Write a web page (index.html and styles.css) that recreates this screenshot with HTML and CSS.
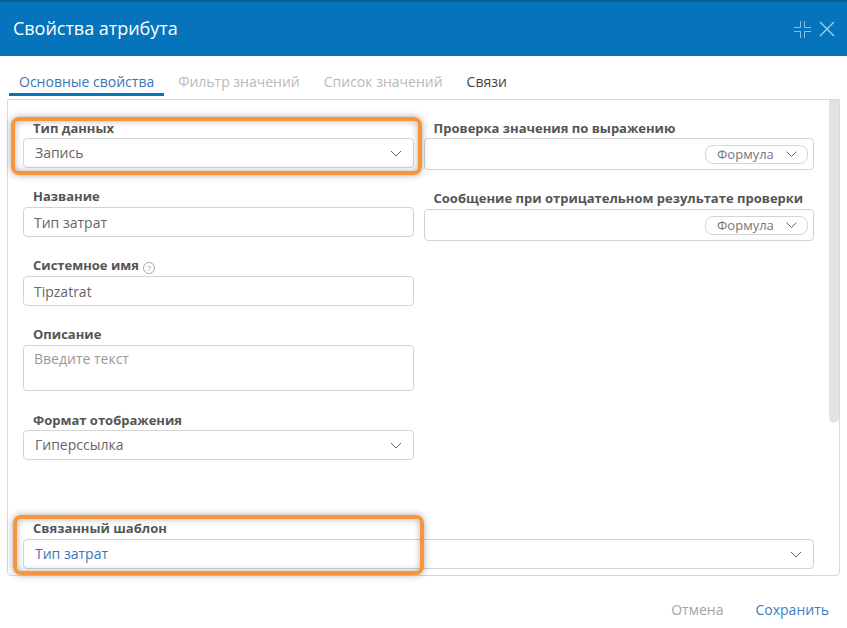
FILE: index.html
```html
<!DOCTYPE html>
<html lang="en">
<head>
  <meta charset="UTF-8">
  <title>Свойства атрибута</title>
  <link rel="stylesheet" href="styles.css">
</head>
<body>
  <div class="dialog">
    <div class="header">
      <span class="title">Свойства атрибута</span>
      <div class="header-icons">
        <svg width="17" height="17" viewBox="0 0 17 17" fill="none" stroke="#8cc0e3" stroke-width="1">
          <path d="M0 6.500h6.500V0M17 6.500h-6.500V0M0 10.500h6.500V17M17 10.500h-6.500V17"/>
        </svg>
        <svg width="16" height="16" viewBox="0 0 16 16" fill="none" stroke="#a9d0ea" stroke-width="1.3">
          <path d="M1 1l14 14M15 1L1 15"/>
        </svg>
      </div>
    </div>

    <div class="tabs">
      <div class="tab active">Основные свойства</div>
      <div class="tab disabled">Фильтр значений</div>
      <div class="tab disabled">Список значений</div>
      <div class="tab dark">Связи</div>
    </div>

    <div class="panel">
      <div class="scrollbar"></div>
      <div class="columns">
        <div class="col">
          <div class="field">
            <div class="label low">Тип данных</div>
            <div class="control select">
              <span>Запись</span>
              <svg class="chevron" width="12" height="7" viewBox="0 0 12 7" fill="none" stroke="#666" stroke-width="1"><path d="M1 1l5 5 5-5"/></svg>
            </div>
          </div>
          <div class="field">
            <div class="label">Название</div>
            <div class="control">Тип затрат</div>
          </div>
          <div class="field">
            <div class="label">Системное имя <span class="help">?</span></div>
            <div class="control">Tipzatrat</div>
          </div>
          <div class="field">
            <div class="label">Описание</div>
            <div class="control area">Введите текст</div>
          </div>
          <div class="field">
            <div class="label low">Формат отображения</div>
            <div class="control select">
              <span>Гиперссылка</span>
              <svg class="chevron" width="12" height="7" viewBox="0 0 12 7" fill="none" stroke="#666" stroke-width="1"><path d="M1 1l5 5 5-5"/></svg>
            </div>
          </div>
        </div>

        <div class="col">
          <div class="field">
            <div class="label low">Проверка значения по выражению</div>
            <div class="control formula">
              <div class="pill">
                <span>Формула</span>
                <svg width="11" height="6" viewBox="0 0 11 6" fill="none" stroke="#666" stroke-width="1"><path d="M.5.500l5 5 5-5"/></svg>
              </div>
            </div>
          </div>
          <div class="field">
            <div class="label">Сообщение при отрицательном результате проверки</div>
            <div class="control formula">
              <div class="pill">
                <span>Формула</span>
                <svg width="11" height="6" viewBox="0 0 11 6" fill="none" stroke="#666" stroke-width="1"><path d="M.5.500l5 5 5-5"/></svg>
              </div>
            </div>
          </div>
        </div>
      </div>

      <div class="field linked">
        <div class="label">Связанный шаблон</div>
        <div class="control select">
          <span class="link">Тип затрат</span>
          <svg class="chevron" width="12" height="7" viewBox="0 0 12 7" fill="none" stroke="#666" stroke-width="1"><path d="M1 1l5 5 5-5"/></svg>
        </div>
      </div>
    </div>

    <div class="footer">
      <span class="btn cancel">Отмена</span>
      <span class="btn save">Сохранить</span>
    </div>

    <div class="mark mark-type"></div>
    <div class="mark mark-linked"></div>
  </div>
</body>
</html>
```

FILE: styles.css
```css
body {
  margin: 0;
  background: #fff;
  font-family: "Open Sans", sans-serif;
  font-size: 14px;
  color: #555;
}
.dialog {
  position: relative;
  width: 847px;
  height: 628px;
  overflow: hidden;
}
.header {
  height: 56px;
  box-sizing: border-box;
  border-top: 2px solid #0b5f99;
  background: #0673bd;
  display: flex;
  align-items: center;
  justify-content: space-between;
  padding: 0 12px 3px 13px;
}
.title {
  color: #fff;
  font-size: 18px;
  letter-spacing: -0.03px;
}
.header-icons {
  display: flex;
  align-items: center;
  gap: 8px;
  padding-top: 3px;
}
.tabs {
  display: flex;
  gap: 4px;
  height: 40px;
  box-sizing: border-box;
  padding: 11px 0 0 9px;
}
.tab {
  padding: 0 10px;
  height: 29px;
  box-sizing: border-box;
  line-height: 30px;
}
.tab.active {
  color: #3a74b8;
  border-bottom: 3px solid #0673bd;
}
.tab.disabled {
  color: #b9b9b9;
}
.tab.dark {
  color: #444;
}
.panel {
  position: relative;
  width: 833px;
  height: 477px;
  box-sizing: border-box;
  margin-left: 7px;
  margin-top: 3px;
  border: 1px solid #d9d9d9;
  border-radius: 0 0 4px 4px;
  padding: 19px 25px 0 15px;
}
.scrollbar {
  position: absolute;
  top: 0;
  right: 0;
  width: 10px;
  height: 323px;
  background: #e3e3e3;
  border-radius: 0 0 5px 5px;
}
.columns {
  display: grid;
  grid-template-columns: 1fr 1fr;
  column-gap: 10px;
  height: 401px;
}
.field {
  margin-bottom: 20px;
}
.field.linked {
  margin-bottom: 0;
}
.label {
  height: 19px;
  line-height: 17px;
  padding-left: 10px;
  font-size: 13px;
  font-weight: 700;
  color: #555;
  white-space: nowrap;
}
.label.low {
  line-height: 19px;
}
.control {
  height: 30px;
  box-sizing: border-box;
  border: 1px solid #d4d4d4;
  border-radius: 4px;
  padding: 0 10px;
  line-height: 30px;
  background: #fff;
  color: #666;
}
.select {
  display: flex;
  align-items: center;
  justify-content: space-between;
  padding: 0 11px 0 11px;
  line-height: 28px;
}
.area {
  height: 46px;
  line-height: 26px;
  color: #999;
}
.formula {
  height: 32px;
  display: flex;
  align-items: center;
  justify-content: flex-end;
  padding: 0 5px 0 0;
}
.pill {
  width: 103px;
  height: 19px;
  box-sizing: border-box;
  border: 1px solid #d4d4d4;
  border-radius: 8px;
  display: flex;
  align-items: center;
  justify-content: space-between;
  padding: 0 10px 0 11px;
  font-size: 13px;
  line-height: 17px;
  color: #777;
}
.link {
  color: #3a74b8;
}
.help {
  display: inline-block;
  width: 10px;
  height: 10px;
  margin-left: 1px;
  border: 1px solid #aaa;
  border-radius: 50%;
  font-size: 8px;
  font-weight: 400;
  line-height: 10px;
  text-align: center;
  color: #999;
  vertical-align: -1px;
}
.footer {
  display: flex;
  justify-content: flex-end;
  gap: 32px;
  padding: 24px 18px 0 0;
  line-height: 20px;
}
.cancel {
  color: #a3a3a3;
}
.save {
  color: #3a7fc4;
}
/* orange callouts drawn over the form */
.mark {
  position: absolute;
  box-sizing: border-box;
  border: 4px solid #f7953a;
  border-radius: 8px;
  box-shadow: 0 0 7px rgba(0, 0, 0, 0.35), inset 0 0 7px rgba(0, 0, 0, 0.3);
}
.mark-type {
  left: 11px;
  top: 117px;
  width: 411px;
  height: 58px;
}
.mark-linked {
  left: 13px;
  top: 515px;
  width: 411px;
  height: 60px;
}
```
